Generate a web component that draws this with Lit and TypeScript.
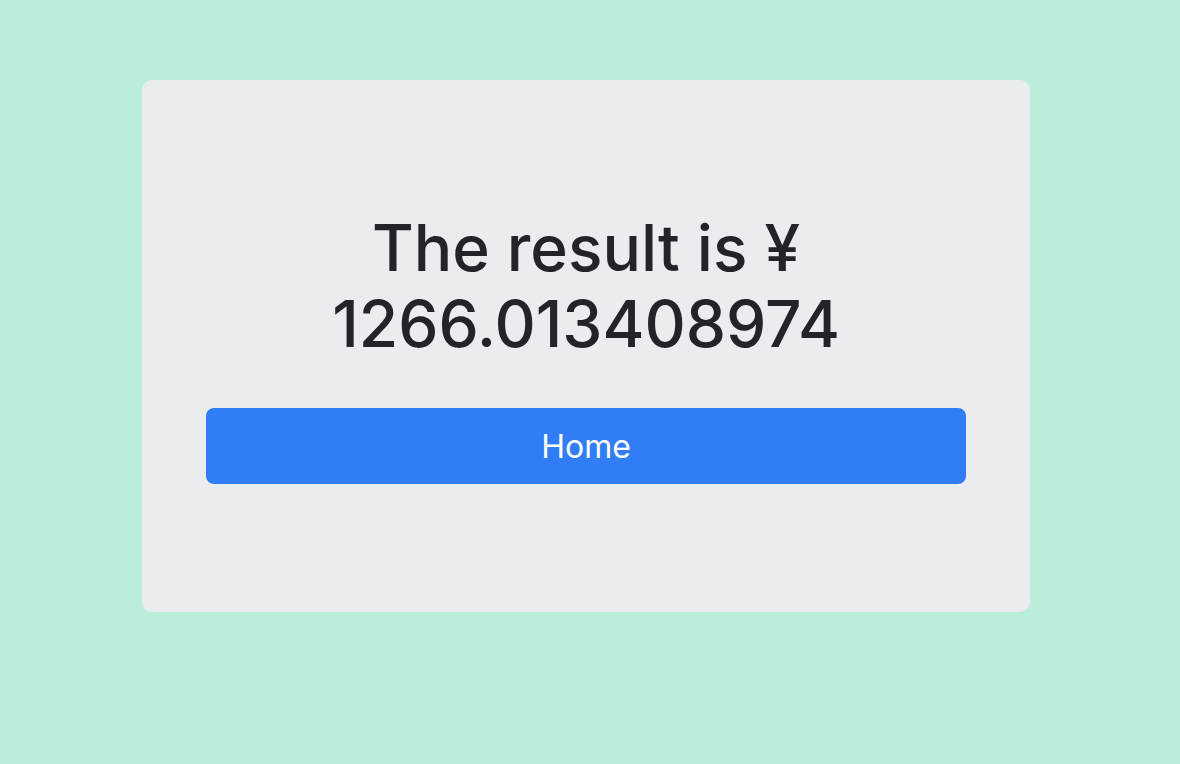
import { LitElement, html, css } from "lit";
import { customElement, property } from "lit/decorators.js";

@customElement("app-root")
export class AppRoot extends LitElement {
  @property() currency = "¥";
  @property() result = "1266.013408974";

  static styles = css`
    :host {
      display: block;
      box-sizing: border-box;
      min-height: 100vh;
      padding: 80px 150px 80px 142px;
      background: #baeedb;
      color: #212529;
      font-family: Inter, "Liberation Sans", sans-serif;
    }
    .jumbotron {
      padding: 130px 64px 128px;
      border-radius: 10px;
      background: #eaecef;
      text-align: center;
    }
    .title {
      margin: 0 0 46px;
      padding: 0 120px;
      font-size: 64px;
      font-weight: 500;
      line-height: 76px;
    }
    .button {
      display: block;
      padding: 15px 24px 13px;
      border-radius: 8px;
      background: #307df6;
      color: #fff;
      font-size: 32px;
      line-height: 48px;
      text-decoration: none;
    }
  `;

  render() {
    return html`
      <main class="jumbotron">
        <h1 class="title">The result is ${this.currency} ${this.result}</h1>
        <a class="button" href="#">Home</a>
      </main>
    `;
  }
}
